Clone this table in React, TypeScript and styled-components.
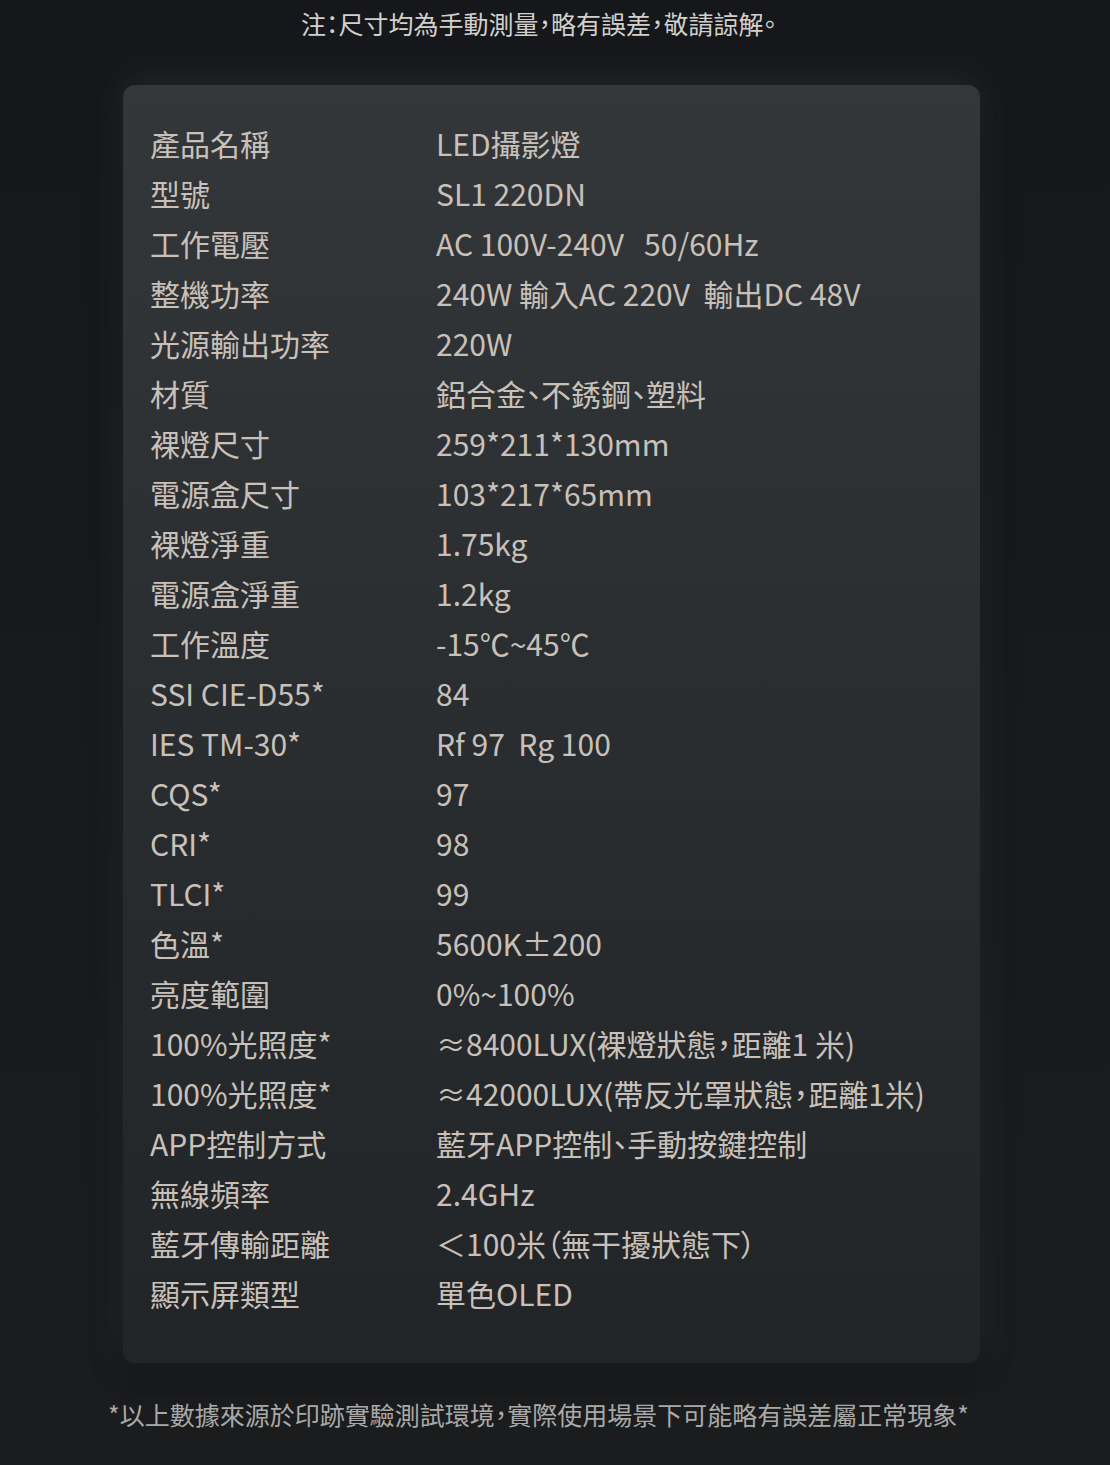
import React from 'react'
import styled, { createGlobalStyle } from 'styled-components'

const GlobalStyle = createGlobalStyle`
  html, body {
    margin: 0;
    padding: 0;
    background: #18191b;
  }
  body {
    font-family: 'Noto Sans CJK TC', 'Noto Sans CJK SC', 'Noto Sans', sans-serif;
    font-feature-settings: 'palt';
  }
`

const Page = styled.div`
  width: 1110px;
  height: 1465px;
  background: linear-gradient(180deg, #15171a 0%, #1b1c1e 100%);
  display: flex;
  flex-direction: column;
  overflow: hidden;
`

const Note = styled.div<{ $top?: boolean }>`
  width: 1077px;
  text-align: center;
  font-size: 25px;
  line-height: 34px;
  color: ${(p) => (p.$top ? '#d3d0cc' : '#aaa9a7')};
  padding-top: ${(p) => (p.$top ? '6px' : '34px')};
`

const Card = styled.div`
  margin: 45px 0 0 123px;
  width: 857px;
  box-sizing: border-box;
  padding: 33px 0 45px 27px;
  border-radius: 12px;
  background: linear-gradient(180deg, #34373a 0%, #2b2e31 45%, #222528 100%);
  box-shadow: 0 -4px 36px rgba(85, 90, 95, 0.3), 0 12px 30px rgba(0, 0, 0, 0.45);
`

const SpecTable = styled.div`
  display: grid;
  grid-template-columns: 286px 1fr;
  grid-auto-rows: 50px;
  color: #c9c1b9;
  font-size: 30px;
  line-height: 50px;
`

const Label = styled.div`
  white-space: nowrap;
`

const Value = styled.div`
  white-space: pre;
`

const specs: [string, string][] = [
  ['產品名稱', 'LED攝影燈'],
  ['型號', 'SL1 220DN'],
  ['工作電壓', 'AC 100V-240V   50/60Hz'],
  ['整機功率', '240W 輸入AC 220V  輸出DC 48V'],
  ['光源輸出功率', '220W'],
  ['材質', '鋁合金、不銹鋼、塑料'],
  ['裸燈尺寸', '259*211*130mm'],
  ['電源盒尺寸', '103*217*65mm'],
  ['裸燈淨重', '1.75kg'],
  ['電源盒淨重', '1.2kg'],
  ['工作溫度', '-15℃~45℃'],
  ['SSI CIE-D55*', '84'],
  ['IES TM-30*', 'Rf 97  Rg 100'],
  ['CQS*', '97'],
  ['CRI*', '98'],
  ['TLCI*', '99'],
  ['色溫*', '5600K±200'],
  ['亮度範圍', '0%~100%'],
  ['100%光照度*', '≈8400LUX(裸燈狀態，距離1 米)'],
  ['100%光照度*', '≈42000LUX(帶反光罩狀態，距離1米)'],
  ['APP控制方式', '藍牙APP控制、手動按鍵控制'],
  ['無線頻率', '2.4GHz'],
  ['藍牙傳輸距離', '＜100米（無干擾狀態下）'],
  ['顯示屏類型', '單色OLED'],
]

export default function App() {
  return (
    <Page>
      <GlobalStyle />
      <Note $top>注：尺寸均為手動測量，略有誤差，敬請諒解。</Note>
      <Card>
        <SpecTable>
          {specs.map(([label, value], i) => (
            <React.Fragment key={i}>
              <Label>{label}</Label>
              <Value>{value}</Value>
            </React.Fragment>
          ))}
        </SpecTable>
      </Card>
      <Note>*以上數據來源於印跡實驗測試環境，實際使用場景下可能略有誤差屬正常現象*</Note>
    </Page>
  )
}
